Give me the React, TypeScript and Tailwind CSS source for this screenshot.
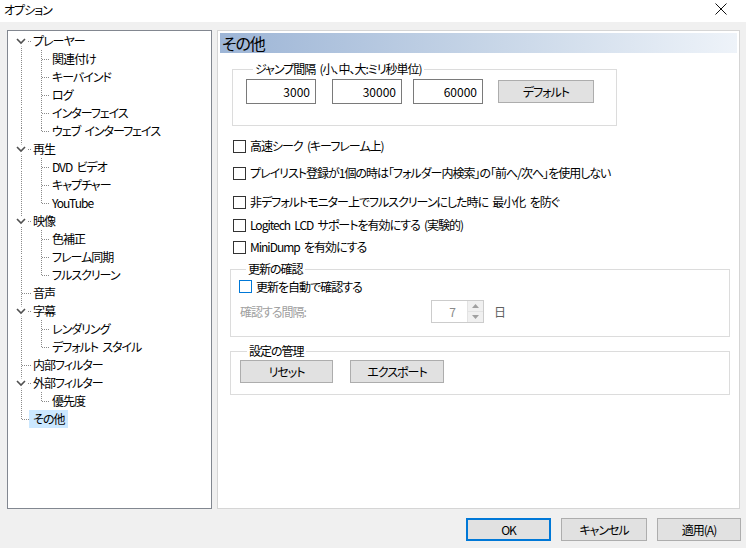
import { ReactNode } from 'react'

interface Node {
  label: string
  children?: string[]
  selected?: boolean
}

const TREE: Node[] = [
  { label: 'プレーヤー', children: ['関連付け', 'キーバインド', 'ログ', 'インターフェイス', 'ウェブ インターフェイス'] },
  { label: '再生', children: ['DVD ビデオ', 'キャプチャー', 'YouTube'] },
  { label: '映像', children: ['色補正', 'フレーム同期', 'フルスクリーン'] },
  { label: '音声' },
  { label: '字幕', children: ['レンダリング', 'デフォルト スタイル'] },
  { label: '内部フィルター' },
  { label: '外部フィルター', children: ['優先度'] },
  { label: 'その他', selected: true },
]

const ROW_H = 18
const FONT =
  "font-['Noto_Sans_CJK_JP',sans-serif] [font-feature-settings:'palt'] tracking-[-1px] [word-spacing:2.5px]"

type Row = { label: string; level: number; selected?: boolean }

const rows: Row[] = []
const rootIdx: number[] = []
const groups: { parent: number; kids: number[] }[] = []
TREE.forEach(n => {
  const p = rows.length
  rootIdx.push(p)
  rows.push({ label: n.label, level: 0, selected: n.selected })
  if (n.children) {
    const kids: number[] = []
    n.children.forEach(c => {
      kids.push(rows.length)
      rows.push({ label: c, level: 1 })
    })
    groups.push({ parent: p, kids })
  }
})

const cy = (i: number) => 1 + i * ROW_H + 9.5

function TreeLines() {
  return (
    <svg className="absolute inset-0 pointer-events-none" width="203" height="477">
      <g stroke="#8a8a8a" strokeWidth="1" strokeDasharray="1 1" shapeRendering="crispEdges">
        <line x1="13.5" y1={cy(0)} x2="13.5" y2={cy(rootIdx[rootIdx.length - 1])} />
        {rootIdx.map(i => (
          <line key={'h' + i} x1="14" y1={cy(i)} x2="23" y2={cy(i)} />
        ))}
        {groups.map(g => (
          <g key={'g' + g.parent}>
            <line x1="33.5" y1={cy(g.parent) + 8} x2="33.5" y2={cy(g.kids[g.kids.length - 1])} />
            {g.kids.map(k => (
              <line key={k} x1="34" y1={cy(k)} x2="42" y2={cy(k)} />
            ))}
          </g>
        ))}
      </g>
      {groups.map(g => (
        <g key={'c' + g.parent}>
          <rect x="7" y={cy(g.parent) - 5} width="12" height="10" fill="#fff" />
          <polyline
            points={`9,${cy(g.parent) - 2.5} 13,${cy(g.parent) + 1.5} 17,${cy(g.parent) - 2.5}`}
            fill="none"
            stroke="#505050"
            strokeWidth="1.6"
          />
        </g>
      ))}
    </svg>
  )
}

function Checkbox({ focus }: { focus?: boolean }) {
  return (
    <span
      className={`w-[13px] h-[13px] shrink-0 bg-white border ${focus ? 'border-[#0078d7]' : 'border-[#333333]'}`}
    />
  )
}

function Button({ children, w, primary }: { children: ReactNode; w: string; primary?: boolean }) {
  return (
    <div
      className={`${w} h-[23px] flex items-center justify-center bg-[#e1e1e1] text-[12px] text-black ${
        primary ? 'border-2 border-[#0078d7]' : 'border border-[#adadad]'
      }`}
    >
      {children}
    </div>
  )
}

function Group({ title, className, children }: { title: string; className: string; children: ReactNode }) {
  return (
    <fieldset className={`border border-[#dcdcdc] ${className}`}>
      <legend className="ml-[7px] px-[2px] text-[12px] leading-[14px] text-black">{title}</legend>
      {children}
    </fieldset>
  )
}

function NumBox({ value }: { value: string }) {
  return (
    <div className="w-[70px] h-[25px] border border-[#7a7a7a] bg-white flex items-center justify-end pr-[5px] text-[12px] tracking-normal">
      {value}
    </div>
  )
}

const CHECKS = [
  { label: '高速シーク (キーフレーム上)', mt: 'mt-[13px]' },
  { label: 'プレイリスト登録が1個の時は「フォルダー内検索」の「前へ/次へ」を使用しない', mt: 'mt-[13px]' },
  { label: '非デフォルトモニター上でフルスクリーンにした時に 最小化 を防ぐ', mt: 'mt-[15px]' },
  { label: 'Logitech LCD サポートを有効にする (実験的)', mt: 'mt-[9px]' },
  { label: 'MiniDump を有効にする', mt: 'mt-[8px]' },
]

export default function App() {
  return (
    <div className={`w-[746px] h-[548px] bg-[#f0f0f0] flex flex-col text-black ${FONT}`}>
      {/* title bar */}
      <div className="h-[22px] bg-white flex items-center justify-between pl-[4px] pr-[19px]">
        <span className="text-[12px] leading-none -mt-[3px]">オプション</span>
        <svg width="12" height="12" viewBox="0 0 12 12" className="-mt-[5px]">
          <path d="M0.5 0.5 L11.5 11.5 M11.5 0.5 L0.5 11.5" stroke="#111" strokeWidth="1" />
        </svg>
      </div>

      <div className="flex pl-[7px] pt-[8px]">
        {/* tree */}
        <div className="relative w-[205px] h-[479px] bg-white border border-[#828790]">
          <TreeLines />
          <div className="relative pt-[1px]">
            {rows.map((r, i) => (
              <div key={i} className="h-[18px] flex items-center">
                <span
                  className={`h-[18px] flex items-center px-[4px] text-[12px] leading-none whitespace-pre ${
                    r.level === 0 ? 'ml-[21px]' : 'ml-[40px]'
                  } ${r.selected ? 'bg-[#cce8ff]' : ''}`}
                >
                  {r.label}
                </span>
              </div>
            ))}
          </div>
        </div>

        {/* page */}
        <div className="ml-[5px] w-[523px] h-[479px] bg-white border border-[#d5d5d5] p-[2px]">
          <div className="h-[20px] flex items-center pl-[2px] bg-[linear-gradient(to_right,#9db5d6,#c9d7e8_55%,#eef3f9)] text-[16px] leading-none">
            その他
          </div>

          <Group title="ジャンプ間隔 (小、中、大:ミリ秒単位)" className="ml-[12px] mt-[9px] w-[385px] h-[64px] px-[13px]">
            <div className="flex items-center mt-[3px]">
              <NumBox value="3000" />
              <div className="ml-[16px]">
                <NumBox value="30000" />
              </div>
              <div className="ml-[11px]">
                <NumBox value="60000" />
              </div>
              <div className="ml-[15px]">
                <Button w="w-[96px]">デフォルト</Button>
              </div>
            </div>
          </Group>

          <div className="ml-[13px] flex flex-col">
            {CHECKS.map(c => (
              <div key={c.label} className={`flex items-center h-[14px] ${c.mt}`}>
                <Checkbox />
                <span className="ml-[4px] text-[12px] leading-none whitespace-pre">{c.label}</span>
              </div>
            ))}
          </div>

          <Group title="更新の確認" className="ml-[10px] mt-[8px] w-[500px] h-[75px] px-[8px]">
            <div className="flex items-center mt-[4px]">
              <Checkbox focus />
              <span className="ml-[4px] text-[12px] leading-none">更新を自動で確認する</span>
            </div>
            <div className="flex items-center mt-[7px] ml-[1px]">
              <span className="w-[191px] text-[12px] leading-none text-[#a0a0a0]">確認する間隔:</span>
              <div className="w-[53px] h-[23px] border border-[#cccccc] bg-white flex">
                <div className="flex-1 flex items-center justify-end pr-[12px] text-[12px] text-[#8a8a8a]">7</div>
                <div className="w-[16px] flex flex-col border-l border-[#e3e3e3]">
                  <div className="flex-1 bg-[#f0f0f0] flex items-center justify-center border-b border-[#e3e3e3]">
                    <svg width="7" height="4" viewBox="0 0 7 4">
                      <path d="M0 4 L3.5 0 L7 4 Z" fill="#a0a0a0" />
                    </svg>
                  </div>
                  <div className="flex-1 bg-[#f0f0f0] flex items-center justify-center">
                    <svg width="7" height="4" viewBox="0 0 7 4">
                      <path d="M0 0 L3.5 4 L7 0 Z" fill="#a0a0a0" />
                    </svg>
                  </div>
                </div>
              </div>
              <span className="ml-[10px] text-[12px] leading-none text-[#606060]">日</span>
            </div>
          </Group>

          <Group title="設定の管理" className="ml-[10px] mt-[7px] w-[500px] h-[51px] px-[9px]">
            <div className="flex items-center mt-[2px] gap-[17px]">
              <Button w="w-[93px]">リセット</Button>
              <Button w="w-[94px]">エクスポート</Button>
            </div>
          </Group>
        </div>
      </div>

      {/* dialog buttons */}
      <div className="flex justify-end gap-[10px] pr-[5px] mt-[9px]">
        <Button w="w-[85px]" primary>
          OK
        </Button>
        <Button w="w-[86px]">キャンセル</Button>
        <Button w="w-[84px]">適用(A)</Button>
      </div>
    </div>
  )
}
